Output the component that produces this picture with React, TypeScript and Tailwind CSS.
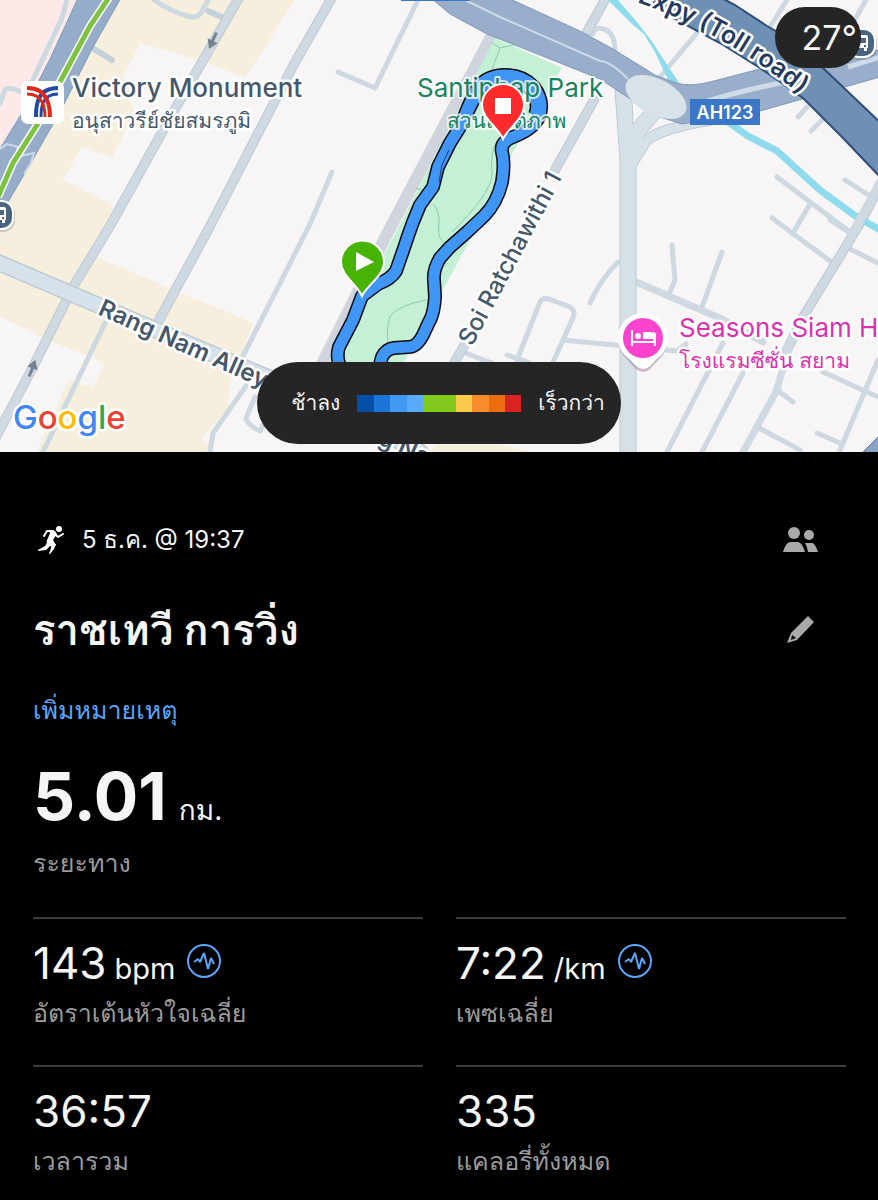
import React from "react";

const MINOR = "#cfd9e1";
const STREET = "#cdd8e0";
const ROAD_EDGE = "#bccad5";

const thinStreets = [
  "M67 0 L62 18 L30 86",
  "M0 104 L5 89 Q11 87 22 92",
  "M154 0 Q168 10 187 16 Q199 20 203 9 L208 0",
  "M418 0 L375 88 L338 72",
  "M332 172 L310 224 L243 356",
  "M246 386 L213 433 L210 452",
  "M255 397 L246 418 Q246 424 260 431 L268 415",
  "M105 323 L43 452",
  "M697 33 L660 77",
  "M787 0 L770 27",
  "M866 0 L850 28",
  "M593 34 Q595 26 603 29 Q614 31 615 49",
  "M807 107 L798 117",
  "M822 120 L811 131",
  "M845 180 L870 196",
  "M777 177 L810 202 L850 232",
  "M772 218 L830 261",
  "M810 204 L793 233",
  "M830 220 L850 233",
  "M848 248 L878 263",
  "M672 245 L675 280 L670 292",
  "M722 252 L702 307",
  "M618 262 Q600 280 590 303",
  "M563 340 L677 351 L686 344",
  "M723 343 L667 452",
  "M743 373 L702 452",
  "M777 390 L793 402",
  "M757 427 L800 450",
  "M823 372 L878 397",
  "M878 360 L840 450",
  "M817 433 L842 444",
  "M517 360 L540 302 Q542 297 549 299 L570 307 Q576 311 573 318 L553 362",
  "M507 355 L530 363",
  "M460 351 L492 363",
];

const wideStreets = [
  "M240 -4 L175 109 L110 226 L73 287 L33 367 L-4 437",
  "M334 -6 L293 66 L208 230 L158 322",
  "M594 100 L555 170",
  "M464 346 L450 370",
  "M606 -2 L587 32",
  "M880 184 L862 220 L803 317 L787 350",
];

const lap =
  "M362 296 L378 284 Q391 279 396 271 L404 248 L408 236 L413 222 L420 205 L433 187 L438 167 L450 143 L460 127 L468 107 L477 88 Q487 75 505 75 Q523 75 534 87 Q545 102 539 117 Q534 129 513 137 Q500 142 502 152 Q505 163 502 182 Q497 203 484 216 L467 232 L450 247 L440 258 Q433 270 434 280 L435 297 Q434 311 431 318 Q427 326 423 335 Q416 348 408 347 L394 348 Q386 349 382 357 L376 380 L350 385 L340 366 Q336 357 339 347 L353 320 Z";
const secondLap = "M466 115 L475 97 Q484 78 505 78 Q521 78 531 90 Q540 103 535 115";

const paceColors = [
  "bg-[#0450a8]",
  "bg-[#1b76d8]",
  "bg-[#4199f4]",
  "bg-[#5aaafc]",
  "bg-[#82c91e]",
  "bg-[#82c91e]",
  "bg-[#fbcb4b]",
  "bg-[#f98d2b]",
  "bg-[#ee6c10]",
  "bg-[#d92323]",
];

function BusBadge({ x, y }: { x: number; y: number }) {
  return (
    <g transform={`translate(${x} ${y})`}>
      <rect x="-14" y="-13" width="30" height="30" rx="12" fill="#5a6b7a" opacity=".3" />
      <rect x="-15" y="-15" width="30" height="30" rx="12" fill="#fff" />
      <rect x="-13" y="-13" width="26" height="26" rx="10" fill="#4b6580" />
      <path
        fill="#fff"
        fillRule="evenodd"
        d="M-7-6q0-2 2-2H5q2 0 2 2V5H6v3H3V5H-3v3H-6V5h-1ZM-5-5V0H5V-5ZM-5 2v2h2V2ZM3 2v2h2V2Z"
      />
    </g>
  );
}

function DirectionArrow({ x, y, angle }: { x: number; y: number; angle: number }) {
  return (
    <g transform={`translate(${x} ${y}) rotate(${angle})`} fill="#76828f">
      <rect x="-1" y="-1" width="3" height="10" />
      <path d="M0-9 L6 0 H-5 Z" />
    </g>
  );
}

function RouteMap() {
  const halo = { stroke: "#fff", strokeWidth: 5, strokeLinejoin: "round" as const, paintOrder: "stroke" };
  const parkHalo = { stroke: "#fff", strokeWidth: 4, strokeLinejoin: "round" as const, paintOrder: "stroke" };
  return (
    <svg
      viewBox="0 0 878 452"
      preserveAspectRatio="xMidYMid slice"
      className="block h-full w-full"
      role="img"
      aria-label="Map"
    >
      <rect width="878" height="452" fill="#f7f5f6" />
      <path d="M0 0H80L0 152Z" fill="#fde9e8" />
      <path
        d="M120 0H295L245 78L205 62L140 43L123 77L134 112L112 158L82 147L63 180L113 205L98 258L253 323L230 383L227 410L202 438L212 452H37L68 380L93 388L105 363L53 342L0 317V200Z"
        fill="#f6efdd"
      />
      <path d="M436 445H500L530 452H430Z" fill="#f6efdd" />

      <g fill="none" strokeLinecap="round" strokeLinejoin="round">
        <g stroke={STREET} strokeWidth="5">
          {thinStreets.map((d) => (
            <path key={d} d={d} />
          ))}
        </g>
        <path d="M208 11L224 18M94 49L112 60" stroke="#c5d1da" strokeWidth="6" />
        <g stroke={ROAD_EDGE} strokeWidth="10">
          {wideStreets.map((d) => (
            <path key={d} d={d} />
          ))}
        </g>
        <g stroke={MINOR} strokeWidth="8">
          {wideStreets.map((d) => (
            <path key={d} d={d} />
          ))}
          <path d="M636 282L722 319L763 342M778 388L742 454" strokeWidth="7" />
          <path d="M792 340L777 388" strokeWidth="7" />
        </g>
        <path d="M-10 259L100 306L262 375L300 390L420 452" stroke={ROAD_EDGE} strokeWidth="17" />
        <path d="M-10 259L100 306L262 375L300 390L420 452" stroke="#d7e1e9" strokeWidth="14" />
      </g>

      <path
        d="M608 0L618 0L637 22L651 40L660 54L680 84H670L655 52L644 34L633 25Z"
        fill="#8edbed"
      />
      <path d="M728 122L748 136L777 151L820 190L857 217L882 231" fill="none" stroke="#8edbed" strokeWidth="7" />
      <path d="M880 184L850 238" fill="none" stroke={MINOR} strokeWidth="9" />

      <path
        d="M615 90L632 98L633 124L645 110L660 117L643 137Q661 121 700 120L712 125Q668 132 651 143L636 167V454H620V160Z"
        fill="#d6e0e7"
        stroke={ROAD_EDGE}
      />

      <path d="M78-2L50 59L22 113L-2 152V219L25 173L60 112L93 47L121-2Z" fill="#96adca" stroke="#7f9abc" />
      <path d="M0 149L7 144L18 147L16 157L34 153L31 163L24 174" fill="none" stroke="#cfdae8" strokeWidth="2" />
      <path d="M110-4L90 26L60 82L37 125L13 163L-2 197" fill="none" stroke="#fff" strokeWidth="8" />
      <path d="M110-4L90 26L60 82L37 125L13 163L-2 197" fill="none" stroke="#7fc241" strokeWidth="5" />

      <path d="M492 35L388 232L320 368" fill="none" stroke="#d0d5dd" strokeWidth="12" />
      <path d="M495 38L562 68L540 105L513 152L487 211L470 240L440 295L403 364H328L397 230Z" fill="#c4f0d6" />
      <g fill="none" stroke="#8fc9ad" strokeWidth="1">
        <path d="M491 42L500 48L525 42M500 48L491 72M497 142Q490 150 492 175Q490 195 452 232M416 188L425 191M433 204Q440 211 439 225Q436 240 449 247M426 300Q400 305 391 315Q386 322 388 348M449 245L462 228" />
      </g>

      <path
        d="M431-2L450 14L487 34L540 55L600 79L635 102L660 117L682 124L760 111L880 77V50L775 65L710 82Q690 87 676 83L655 75L613 49L580 31L508-2Z"
        fill="#98aeca"
        stroke="#7f9abc"
      />
      <path d="M465 0L500 17L600 61Q610 61 628 79" fill="none" stroke="#cfdbe7" strokeWidth="2" />
      <path d="M708 101Q740 91 785 82L815 70" fill="none" stroke="#cfdbe7" strokeWidth="5" />
      <path d="M848 67L880 57" fill="none" stroke="#cfdbe7" strokeWidth="5" />
      <ellipse cx="656" cy="97" rx="33" ry="18" transform="rotate(27 656 97)" fill="#d9e2e8" />
      <path
        d="M640-8L673 18L720 43L760 68L803 98L842 137L884 181V126L823 68L795 42L767 26L735 5L714-6Z"
        fill="#6e90b4"
        stroke="#2f4d78"
        strokeWidth="2"
      />
      <path d="M862 453L880 435V453Z" fill="#8aa4c5" stroke="#5d7da6" />
      <rect x="401" y="-2" width="69" height="3" fill="#3b77c8" />
      <DirectionArrow x={213} y={41} angle={206} />
      <DirectionArrow x={32} y={368} angle={22} />
      <BusBadge x={861} y={43} />
      <BusBadge x={-1} y={215} />

      <rect x="21" y="81" width="43" height="43" rx="7" fill="#fff" />
      <g fill="none" strokeWidth="4">
        <path d="M58 88Q42 88 38 101Q36 106 36 117" stroke="#1f4ba5" />
        <path d="M58 94Q47 94 43 103Q41 108 41 117" stroke="#1f4ba5" strokeWidth="3" />
        <path d="M27 88Q42 88 47 100Q50 107 50 117" stroke="#e02617" />
        <path d="M27 94Q38 94 42 102Q45 108 45 117" stroke="#e02617" strokeWidth="3" />
      </g>

      <g fill="none" strokeLinejoin="round">
        <path d={lap} stroke="#050b14" strokeWidth="14" />
        <path d={secondLap} stroke="#050b14" strokeWidth="14" />
        <path d={lap} stroke="#4096f5" strokeWidth="11" />
        <path d={secondLap} stroke="#4096f5" strokeWidth="11" />
        <path d="M449 150L442 165L439 182" stroke="#173e7a" strokeWidth="1" />
      </g>

      <g className="font-['Inter','Loma','Noto_Sans',sans-serif]">
        <g fill="#45586c" {...halo}>
          <text x="72" y="97" fontSize="26" fontWeight="500">Victory Monument</text>
          <text x="72" y="128" fontSize="21">อนุสาวรีย์ชัยสมรภูมิ</text>
          <text transform="translate(97 314) rotate(24)" fontSize="24" fontWeight="600">Rang Nam Alley</text>
          <text transform="translate(377 444) rotate(24)" fontSize="24" fontWeight="600">g Nam</text>
          <text transform="translate(472 347) rotate(-62)" fontSize="24" fontWeight="500">Soi Ratchawithi 1</text>
        </g>
        <g fill="#17855f" {...parkHalo} strokeOpacity=".75">
          <text x="417" y="97" fontSize="26">Santiphap Park</text>
          <text x="447" y="128" fontSize="21">สวนสันติภาพ</text>
        </g>
        <g fill="#dd2fb0" {...halo}>
          <text x="679" y="337" fontSize="26">Seasons Siam Hotel</text>
          <text x="679" y="368" fontSize="21">โรงแรมซีซั่น สยาม</text>
        </g>
        <path id="expy" d="M637 2Q734 36 816 108" fill="none" stroke="none" />
        <text fontSize="25" fontWeight="600" fill="#243b5e" {...halo}>
          <textPath href="#expy">Expy (Toll road)</textPath>
        </text>
      </g>
      <rect x="690" y="99" width="70" height="26" fill="#3b77c8" />
      <text x="725" y="119" textAnchor="middle" fontSize="18" fontWeight="600" fill="#fff" className="font-['Inter',sans-serif]">
        AH123
      </text>

      <g fill="#8a6380" opacity=".4">
        <circle cx="643" cy="341" r="24" />
        <path d="M622 354L636 369Q643 375 650 369L664 354Z" />
      </g>
      <g fill="#fff">
        <circle cx="643" cy="338" r="25" />
        <path d="M622 351L636 366Q643 372 650 366L664 351Z" />
      </g>
      <circle cx="643" cy="338" r="20" fill="#fb43cd" />
      <g fill="#fff">
        <path d="M631 330h2v11h20v-7q0-2-2-2h-8v7h10v-7q3 0 3 3v11h-2v-3h-21v3h-2Z" />
        <circle cx="638" cy="336" r="3" />
      </g>

      <path d="M362 296C357 284 341 276 341 262A21 21 0 0 1 384 262C384 276 367 285 362 296Z" fill="#46b306" stroke="#fff" strokeWidth="2" />
      <path d="M356 252V271L374 262Z" fill="#fff" />
      <path d="M503 139C498 127 482 119 482 105A21 21 0 0 1 524 105C524 119 508 128 503 139Z" fill="#fe2a2c" stroke="#fff" strokeWidth="2" />
      <rect x="495" y="98" width="16" height="16" fill="#fff" />

      <text x="13" y="429" fontSize="33" fontWeight="500" className="font-['Inter',sans-serif]" {...halo}>
        <tspan fill="#4285f4">G</tspan>
        <tspan fill="#ea4335">o</tspan>
        <tspan fill="#fbbc05">o</tspan>
        <tspan fill="#4285f4">g</tspan>
        <tspan fill="#34a853">l</tspan>
        <tspan fill="#ea4335">e</tspan>
      </text>
    </svg>
  );
}

function RunnerIcon() {
  return (
    <svg viewBox="0 0 28 30" className="h-[30px] w-7" aria-hidden="true">
      <circle cx="22" cy="4" r="3" fill="#fff" />
      <path d="M12 5L18 6L20 9L16 15L19 20L16 23L10 18Q9 16 11 13L13 8Z" fill="#fff" />
      <path d="M7 11L10 6L16 6M18 9L21 12L26 9" fill="none" stroke="#fff" strokeWidth="2" strokeLinejoin="round" strokeLinecap="round" />
      <path d="M11 16L8 21L1 25L1 26L9 25L14 20ZM15 19L19 19L17 24L13 29L12 29L14 23Z" fill="#fff" />
    </svg>
  );
}

function PeopleIcon() {
  return (
    <svg viewBox="0 0 36 28" className="h-7 w-9" fill="#a9a9a9" aria-hidden="true">
      <circle cx="12" cy="7" r="6" />
      <circle cx="27" cy="9" r="5" />
      <path d="M1 26Q4 16 8 16H16Q20 16 23 26ZM23 17H30Q33 17 36 26H26Q25 20 23 17Z" />
    </svg>
  );
}

function PencilIcon() {
  return (
    <svg viewBox="0 0 28 28" className="size-7" fill="#a9a9a9" aria-hidden="true">
      <path fillRule="evenodd" d="M22 0L28 6L11 24L1 27L5 17ZM6 19L5 24L10 22Z" />
    </svg>
  );
}

function PulseIcon() {
  return (
    <svg viewBox="0 0 34 34" className="size-[34px]" fill="none" stroke="#58a6fc" strokeWidth="2" aria-hidden="true">
      <circle cx="17" cy="17" r="16" />
      <path d="M7 18L11 15L13 18L17 9L21 25L24 14L27 20" strokeLinejoin="bevel" />
    </svg>
  );
}

type StatProps = { value: string; unit?: string; label: string; info?: string };

function Stat({ value, unit, label, info }: StatProps) {
  return (
    <div className="h-[148px] border-t-2 border-[#3d3d3d] pt-4">
      <dd className="flex h-14 items-center">
        <span className="flex items-baseline gap-2 leading-[56px]">
          <span className="text-[44px]">{value}</span>
          {unit && <span className="text-[29px] leading-none">{unit}</span>}
        </span>
        {info && (
          <button type="button" aria-label={info} className="mb-1 ml-3">
            <PulseIcon />
          </button>
        )}
      </dd>
      <dt className="text-[25px] leading-[44px] text-[#9b9b9b]">{label}</dt>
    </div>
  );
}

export default function App() {
  return (
    <main className="min-h-screen bg-black font-['Inter','Loma','Noto_Sans',sans-serif] text-[#f5f5f5]">
      <section className="relative aspect-[878/452] w-full overflow-hidden">
        <RouteMap />
        <div className="absolute top-[7px] right-[17px] flex h-[61px] w-[86px] items-center justify-end rounded-[30px] bg-[#252525] pr-1 text-[34px]">
          27°
        </div>
        <div className="absolute inset-x-0 bottom-2 flex justify-center">
          <div className="flex h-[82px] w-[364px] items-center justify-center gap-[17px] rounded-[41px] bg-[#252525] pl-[18px] text-[21px] whitespace-nowrap">
            <span>ช้าลง</span>
            <div className="flex h-[17px] w-[164px]">
              {paceColors.map((color, i) => (
                <span key={i} className={`h-full flex-1 ${color}`} />
              ))}
            </div>
            <span>เร็วกว่า</span>
          </div>
        </div>
      </section>

      <section className="pr-8 pl-[33px]">
        <header className="pt-[72px]">
          <div className="flex h-8 items-center justify-between">
            <p className="flex items-center gap-[17px] pl-1 text-[24px]">
              <RunnerIcon />
              5 ธ.ค. @ 19:37
            </p>
            <button type="button" aria-label="ผู้ติดตาม" className="mr-7">
              <PeopleIcon />
            </button>
          </div>
          <div className="mt-[42px] flex h-16 items-center justify-between">
            <h1 className="text-[42px] leading-[64px] font-bold">ราชเทวี การวิ่ง</h1>
            <button type="button" aria-label="แก้ไข" className="mr-8">
              <PencilIcon />
            </button>
          </div>
          <button type="button" className="mt-7 block h-10 text-[25px] leading-10 text-[#58a6fc]">
            เพิ่มหมายเหตุ
          </button>
        </header>

        <dl className="mt-6">
          <div className="h-[163px]">
            <dd className="flex h-[84px] items-baseline gap-3 leading-[84px]">
              <span className="text-[66px] font-bold">5.01</span>
              <span className="text-[28px]">กม.</span>
            </dd>
            <dt className="text-[25px] leading-[50px] text-[#9b9b9b]">ระยะทาง</dt>
          </div>
          <div className="grid grid-cols-2 gap-x-[33px]">
            <Stat value="143" unit="bpm" label="อัตราเต้นหัวใจเฉลี่ย" info="กราฟอัตราเต้นหัวใจ" />
            <Stat value="7:22" unit="/km" label="เพซเฉลี่ย" info="กราฟเพซ" />
            <Stat value="36:57" label="เวลารวม" />
            <Stat value="335" label="แคลอรี่ทั้งหมด" />
          </div>
        </dl>
      </section>
    </main>
  );
}
